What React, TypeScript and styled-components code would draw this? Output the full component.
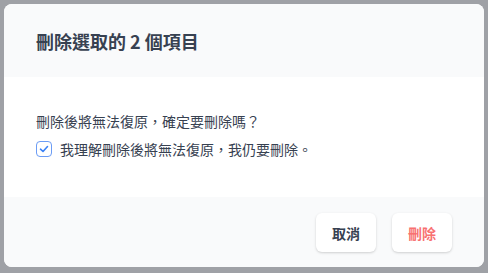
import styled, { createGlobalStyle } from "styled-components";

const GlobalStyle = createGlobalStyle`
  html, body {
    margin: 0;
    padding: 0;
    background: #9fa1a6;
    font-family: "Noto Sans CJK TC", "Noto Sans", sans-serif;
  }
`;

const Backdrop = styled.div`
  width: 488px;
  height: 273px;
  box-sizing: border-box;
  padding: 4px 4px 6px 4px;
  background: #9fa1a6;
`;

const Modal = styled.div`
  height: 263px;
  display: flex;
  flex-direction: column;
  background: #ffffff;
  border-radius: 8px;
  overflow: hidden;
`;

const Header = styled.div`
  height: 73px;
  box-sizing: border-box;
  display: flex;
  align-items: center;
  padding: 0 32px;
  background: #f9fafb;
`;

const Title = styled.h2`
  margin: 0;
  font-size: 18px;
  font-weight: 700;
  color: #374151;
  line-height: 1;
`;

const Body = styled.div`
  height: 120px;
  box-sizing: border-box;
  padding: 35px 32px 0;
  display: flex;
  flex-direction: column;
  gap: 10px;
  background: #ffffff;
`;

const Text = styled.p`
  margin: 0;
  font-size: 14px;
  line-height: 18px;
  color: #374151;
`;

const CheckRow = styled.label`
  display: flex;
  align-items: center;
  gap: 8px;
  font-size: 14px;
  line-height: 18px;
  color: #374151;
`;

const Box = styled.span`
  width: 16px;
  height: 16px;
  box-sizing: border-box;
  border: 1.5px solid #6b9cf5;
  border-radius: 4px;
  display: flex;
  align-items: center;
  justify-content: center;
  color: #3b82f6;
  background: #fff;
`;

const Footer = styled.div`
  flex: 1;
  display: flex;
  justify-content: flex-end;
  align-items: flex-start;
  gap: 16px;
  padding: 16px 32px 0;
  background: #f9fafb;
`;

const Button = styled.button<{ $danger?: boolean }>`
  width: 60px;
  height: 39px;
  border: none;
  border-radius: 6px;
  background: #ffffff;
  box-shadow: 0 1px 3px rgba(0, 0, 0, 0.12), 0 1px 2px rgba(0, 0, 0, 0.06);
  font-family: inherit;
  font-size: 14px;
  font-weight: 700;
  color: ${(p) => (p.$danger ? "#f87171" : "#374151")};
  cursor: pointer;
`;

export default function App() {
  return (
    <>
      <GlobalStyle />
      <Backdrop>
        <Modal>
          <Header>
            <Title>刪除選取的 2 個項目</Title>
          </Header>
          <Body>
            <Text>刪除後將無法復原，確定要刪除嗎？</Text>
            <CheckRow>
              <Box>
                <svg width="10" height="10" viewBox="0 0 10 10" fill="none">
                  <path
                    d="M1.5 5.2 L4 7.5 L8.5 2.5"
                    stroke="currentColor"
                    strokeWidth="1.6"
                    strokeLinecap="round"
                    strokeLinejoin="round"
                  />
                </svg>
              </Box>
              我理解刪除後將無法復原，我仍要刪除。
            </CheckRow>
          </Body>
          <Footer>
            <Button>取消</Button>
            <Button $danger>刪除</Button>
          </Footer>
        </Modal>
      </Backdrop>
    </>
  );
}
